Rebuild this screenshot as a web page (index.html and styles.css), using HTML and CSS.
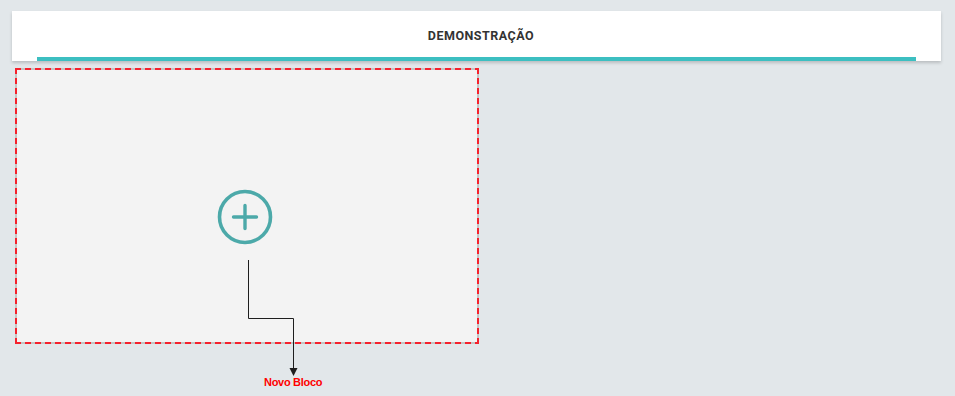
FILE: index.html
```html
<!DOCTYPE html>
<html lang="pt">
<head>
<meta charset="utf-8">
<title>Demonstração</title>
<link rel="stylesheet" href="styles.css">
</head>
<body>
<div class="page">
  <header class="header">
    <div class="header-title">DEMONSTRAÇÃO</div>
    <div class="header-bar"></div>
  </header>
  <main class="canvas">
    <section class="block">
      <button class="add-btn" type="button" aria-label="Adicionar bloco">
        <svg width="58" height="58" viewBox="0 0 58 58">
          <circle cx="29" cy="29" r="25.5" fill="none" stroke="#4ca9a9" stroke-width="3.6"/>
          <path d="M17.5 29 H40.5 M29 17.5 V40.5" stroke="#4ca9a9" stroke-width="3.4" stroke-linecap="round" fill="none"/>
        </svg>
      </button>
    </section>
  </main>
  <svg class="annotation" width="955" height="396" viewBox="0 0 955 396">
    <path d="M248.5 260 V318.5 H293.5 V369" fill="none" stroke="#1e1e1e" stroke-width="1"/>
    <polygon points="289.5,368 297.5,368 293.5,376" fill="#1e1e1e"/>
  </svg>
  <div class="annotation-label">Novo Bloco</div>
</div>
</body>
</html>
```
FILE: styles.css
```css
html, body {
  margin: 0;
  padding: 0;
}
body {
  background: #e2e7ea;
  font-family: Roboto, "Liberation Sans", sans-serif;
  width: 955px;
  height: 396px;
  overflow: hidden;
}
.page {
  position: relative;
  padding: 11px 14px 0 12px;
  height: 396px;
  box-sizing: border-box;
}
.header {
  background: #ffffff;
  height: 50px;
  display: flex;
  flex-direction: column;
  box-shadow: 0 2px 3px rgba(0, 0, 0, 0.18);
}
.header-title {
  flex: 1;
  display: flex;
  align-items: center;
  justify-content: center;
  padding: 3px 0 0 9px;
  font-size: 12.5px;
  font-weight: 700;
  letter-spacing: 0.5px;
  color: #333333;
}
.header-bar {
  height: 4px;
  margin: 0 25px;
  background: #3cbfc1;
}
.canvas {
  margin-top: 7px;
  padding-left: 3px;
}
.block {
  width: 464px;
  height: 276px;
  box-sizing: border-box;
  border: 2px solid transparent;
  background:
    repeating-linear-gradient(90deg, #f5222d 0 6px, #c4c4c4 6px 10px) left top / 100% 2px no-repeat border-box,
    repeating-linear-gradient(90deg, #f5222d 0 6px, #c4c4c4 6px 10px) left bottom / 100% 2px no-repeat border-box,
    repeating-linear-gradient(180deg, #f5222d 0 6px, #c4c4c4 6px 10px) left top / 2px 100% no-repeat border-box,
    repeating-linear-gradient(180deg, #f5222d 0 6px, #c4c4c4 6px 10px) right top / 2px 100% no-repeat border-box,
    linear-gradient(#f3f3f3, #f3f3f3) padding-box;
  display: flex;
  align-items: center;
  justify-content: center;
  padding: 22px 5px 0 0;
}
.add-btn {
  background: none;
  border: 0;
  padding: 0;
  width: 58px;
  height: 58px;
  cursor: pointer;
  display: block;
}
.add-btn svg {
  display: block;
}
.annotation {
  position: absolute;
  left: 0;
  top: 0;
  pointer-events: none;
}
.annotation-label {
  position: absolute;
  left: 264px;
  top: 376px;
  font-family: "Liberation Sans", Arial, sans-serif;
  font-size: 11px;
  font-weight: 700;
  letter-spacing: -0.3px;
  color: #ff0000;
}
```
